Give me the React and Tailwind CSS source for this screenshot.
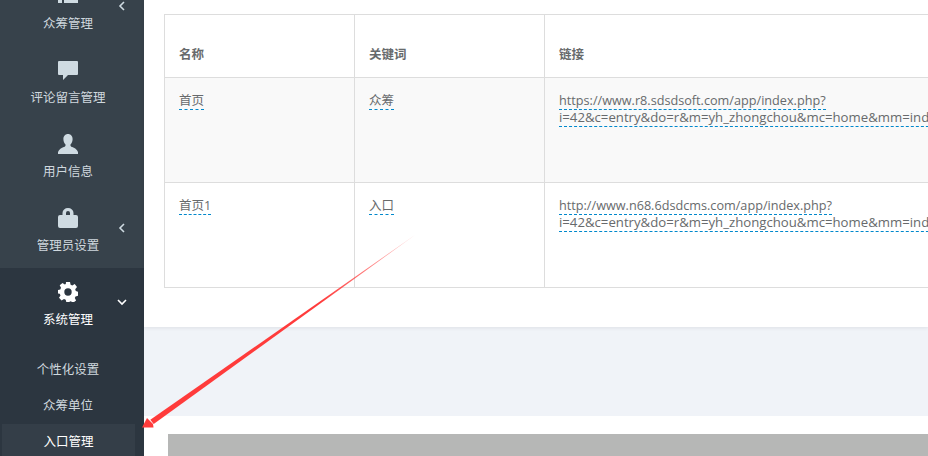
import React from "react";

function ListIcon() {
  return (
    <svg width="20" height="18" viewBox="0 0 20 18" fill="#cfdbe2">
      <rect x="0" y="0" width="4" height="3.5" />
      <rect x="6" y="0" width="14" height="3.5" />
      <rect x="0" y="6" width="4" height="3.5" />
      <rect x="6" y="6" width="14" height="3.5" />
      <rect x="0" y="12" width="4" height="4" />
      <rect x="6" y="12" width="14" height="4" />
    </svg>
  );
}

function CommentIcon() {
  return (
    <svg width="20" height="19" viewBox="0 0 20 19" fill="#cfdbe2">
      <path d="M1 0h18a1 1 0 0 1 1 1v12a1 1 0 0 1-1 1H10l-5 5v-5H1a1 1 0 0 1-1-1V1a1 1 0 0 1 1-1z" />
    </svg>
  );
}

function UserIcon() {
  return (
    <svg width="20" height="20" viewBox="0 0 20 20" fill="#cfdbe2">
      <path d="M10 0c2.800 0 4.600 2.200 4.600 5.200 0 2.200-.9 4-2.100 5.200-.3 1.300.2 2 1.700 2.700 2.300 1 4.800 2.200 5.800 4.900v2H0v-2c1-2.700 3.500-3.900 5.800-4.900 1.500-.7 2-1.400 1.700-2.700C6.300 9.200 5.400 7.400 5.400 5.200 5.400 2.200 7.200 0 10 0z" />
    </svg>
  );
}

function LockIcon() {
  return (
    <svg width="20" height="20" viewBox="0 0 20 20" fill="#cfdbe2">
      <path fillRule="evenodd" d="M4.500 7V5a5.500 5 0 0 1 11 0v2H18a2 2 0 0 1 2 2v9a2 2 0 0 1-2 2H2a2 2 0 0 1-2-2V9a2 2 0 0 1 2-2h2.500zm3.500 0h4V5a2 2 0 0 0-4 0v2z" />
    </svg>
  );
}

function GearIcon() {
  return (
    <svg width="20" height="20" viewBox="0 0 20 20" fill="#ffffff">
      <path fillRule="evenodd" d="M8 0h4l.6 2.800 1.700.7L16.700 2 19 5l-1.800 2.300.6 1.700 2.200.8v4l-2.500.6-.7 1.700 1.300 2.300-3 2.400-2.200-1.600-1.600.6L11.700 20H8.300l-.6-2.200-1.700-.7L3.600 18.500 1 15.700l1.500-2.200-.7-1.700L0 11.500v-3.500l2.300-.6.700-1.700L1.700 3.300 4.500 1l2.300 1.500 1-.5L8 0zm2 6.300a3.700 3.700 0 1 0 0 7.400 3.700 3.700 0 0 0 0-7.400z" />
    </svg>
  );
}

function Chevron({ down, color = "#cfdbe2" }) {
  return (
    <svg width="10" height="10" viewBox="0 0 10 10" fill="none" stroke={color} strokeWidth="1.600">
      {down ? <path d="M1 3l4 4 4-4" /> : <path d="M7 1L3 5l4 4" />}
    </svg>
  );
}

function NavItem({ icon, label, chevron, active }) {
  return (
    <div className="relative flex h-[74px] w-[136px] flex-col items-center pt-[14px]">
      <div className="flex h-[20px] items-center">{icon}</div>
      <span className={`mt-[9px] text-[12.5px] leading-[18px] ${active ? "text-white" : "text-[#cfd8de]"}`}>{label}</span>
      {chevron && <div className="absolute left-[117px] top-[29px]">{chevron}</div>}
    </div>
  );
}

function Editable({ children }) {
  return <span className="border-b border-dashed border-[#0088cc]">{children}</span>;
}

const rows = [
  { name: "首页", key: "众筹", host: "https://www.r8.sdsdsoft.com/app/index.php?", bg: "bg-[#f9f9f9]" },
  { name: "首页1", key: "入口", host: "http://www.n68.6dsdcms.com/app/index.php?", bg: "bg-white" },
];
const query = "i=42&c=entry&do=r&m=yh_zhongchou&mc=home&mm=index";

function Arrow() {
  return (
    <svg className="pointer-events-none absolute left-0 top-0 z-20" width="928" height="456" viewBox="0 0 928 456">
      <defs>
        <linearGradient id="fade" gradientUnits="userSpaceOnUse" x1="415" y1="235" x2="320" y2="303">
          <stop offset="0" stopColor="#ff3b3b" stopOpacity="0.35" />
          <stop offset="1" stopColor="#ff3b3b" />
        </linearGradient>
      </defs>
      <polygon points="415,235 153.700,424 150.300,419.800" fill="url(#fade)" />
      <polygon points="142,427.500 147,418 149.500,420.500 153,424 153.500,427.500" fill="#ff3b3b" />
    </svg>
  );
}

export default function App() {
  return (
    <div className="relative flex h-[456px] w-[928px] overflow-hidden bg-white font-['Open_Sans','Noto_Sans_CJK_SC',sans-serif] text-[12.5px] text-[#676a6c]">
      <aside className="h-full w-[144px] shrink-0 bg-[#37424b]">
        <div className="-mt-[28px]">
          <NavItem icon={<ListIcon />} label="众筹管理" chevron={<Chevron />} />
          <NavItem icon={<CommentIcon />} label="评论留言管理" />
          <NavItem icon={<UserIcon />} label="用户信息" />
          <NavItem icon={<LockIcon />} label="管理员设置" chevron={<Chevron />} />
        </div>
        <div className="h-[200px] bg-[#2c3640]">
          <NavItem icon={<GearIcon />} label="系统管理" active chevron={<Chevron down color="#ffffff" />} />
          <div className="flex flex-col pt-[10px]">
            <div className="flex h-[36px] w-[136px] items-center justify-center text-[#cfd8de]">个性化设置</div>
            <div className="flex h-[36px] w-[136px] items-center justify-center text-[#cfd8de]">众筹单位</div>
            <div className="ml-[2px] flex h-[36px] w-[133px] items-center justify-center bg-[#343e48] text-white">入口管理</div>
          </div>
        </div>
      </aside>

      <main className="flex min-w-0 flex-1 flex-col">
        <section className="relative z-10 h-[327px] shrink-0 overflow-hidden bg-white pl-[20px] pt-[14px] shadow-[0_1px_4px_rgba(0,0,0,0.08)]">
          <table className="w-[1100px] table-fixed border-collapse border border-[#dddddd]">
            <colgroup>
              <col className="w-[190px]" />
              <col className="w-[190px]" />
              <col />
            </colgroup>
            <thead>
              <tr className="h-[63px]">
                <th className="border border-[#dddddd] px-[14px] pb-[12px] text-left align-bottom font-bold">名称</th>
                <th className="border border-[#dddddd] px-[14px] pb-[12px] text-left align-bottom font-bold">关键词</th>
                <th className="border border-[#dddddd] px-[14px] pb-[12px] text-left align-bottom font-bold">链接</th>
              </tr>
            </thead>
            <tbody>
              {rows.map((r) => (
                <tr key={r.name} className={`h-[105px] ${r.bg}`}>
                  <td className="border border-[#dddddd] px-[14px] pt-[14px] align-top leading-[17px]"><Editable>{r.name}</Editable></td>
                  <td className="border border-[#dddddd] px-[14px] pt-[14px] align-top leading-[17px]"><Editable>{r.key}</Editable></td>
                  <td className="border border-[#dddddd] py-[14px] pl-[14px] pr-[500px] align-top text-[12.66px] leading-[17px]">
                    <Editable>{r.host}<span className="text-[13.2px]">{query}</span></Editable>
                  </td>
                </tr>
              ))}
            </tbody>
          </table>
        </section>
        <div className="h-[89px] shrink-0 bg-[#f0f3f8]" />
        <div className="flex-1 bg-white pl-[24px] pt-[18px]">
          <div className="h-[40px] w-full bg-[#b6b7b6]" />
        </div>
      </main>

      <Arrow />
    </div>
  );
}
